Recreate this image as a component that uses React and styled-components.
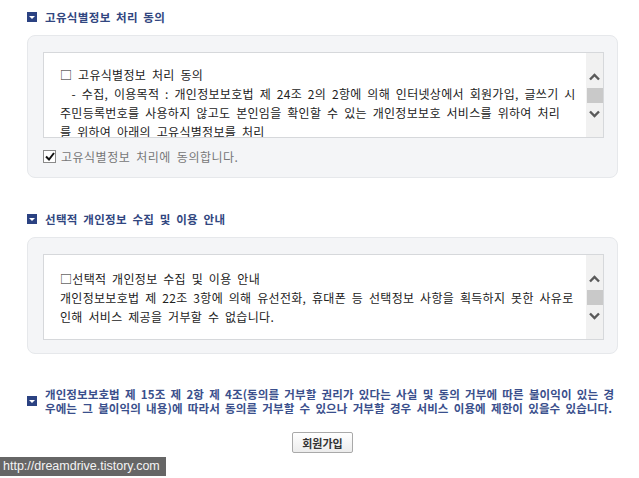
import React from 'react'
import styled, { createGlobalStyle } from 'styled-components'

const GlobalStyle = createGlobalStyle`
    body {
        margin: 0;
        background: #fff;
    }
`
const Page = styled.div`
    width: 639px;
    box-sizing: border-box;
    padding: 9px 21px 0 27px;
    font-family: "Noto Sans CJK KR", sans-serif;
`
const Heading = styled.h3`
    display: flex;
    align-items: center;
    gap: 8px;
    height: 16px;
    margin: ${p => p.$top}px 0 10px 0;
    color: #314680;
    font-size: 11.5px;
    font-weight: 700;
    letter-spacing: 0.35px;
    word-spacing: 2.5px;
`
const Marker = styled.span`
    flex: none;
    width: 10px;
    height: 10px;
    background: #2b4282;
    display: flex;
    justify-content: center;
    align-items: center;
    &::after {
        content: '';
        border-left: 3px solid transparent;
        border-right: 3px solid transparent;
        border-top: 3px solid #fff;
    }
`
const Panel = styled.div`
    background: #f4f5f7;
    border: 1px solid #e6e8eb;
    border-radius: 8px;
    padding: 16px 13px 13px 15px;
`
const Scroller = styled.div`
    display: flex;
    height: 86px;
    box-sizing: border-box;
    background: #fff;
    border: 1px solid #d6d8db;
`
const ScrollText = styled.div`
    flex: 1;
    overflow: hidden;
    padding: ${p => p.$top}px 14px 0 16px;
    color: #222;
    font-size: 12px;
    line-height: 19px;
    letter-spacing: 0.3px;
    word-spacing: 2.8px;
`
const Line = styled.div`
    white-space: pre;
`
const Track = styled.div`
    flex: none;
    width: 17px;
    background: #f1f1f1;
    display: flex;
    flex-direction: column;
    align-items: center;
    justify-content: center;
    gap: 7px;
`
const Thumb = styled.div`
    width: 16px;
    height: 15px;
    background: #c9c9c9;
`
const CheckRow = styled.label`
    display: flex;
    align-items: center;
    gap: 5px;
    height: 16px;
    margin-top: 10px;
    color: #777;
    font-size: 12px;
    letter-spacing: 0.5px;
    word-spacing: 2.8px;
`
const Box = styled.span`
    flex: none;
    width: 11px;
    height: 11px;
    border: 1px solid #8a8a8a;
    background: #fff;
    display: flex;
    align-items: center;
    justify-content: center;
`
const Notice = styled.div`
    display: flex;
    align-items: center;
    gap: 8px;
    margin-top: 33px;
    color: #3a4f8c;
    font-size: 11.5px;
    font-weight: 700;
    line-height: 14px;
    letter-spacing: 0.1px;
    word-spacing: 2.5px;
`
const ButtonRow = styled.div`
    display: flex;
    justify-content: center;
    margin-top: 17px;
`
const Button = styled.button`
    width: 61px;
    height: 21px;
    padding: 0;
    border: 1px solid #a9a9a9;
    border-radius: 2px;
    background: linear-gradient(#ffffff, #ececec);
    color: #333;
    font-family: "Noto Sans CJK KR", sans-serif;
    font-size: 11px;
    font-weight: 700;
    letter-spacing: 0;
`
const Watermark = styled.div`
    position: fixed;
    left: 0;
    bottom: 2px;
    height: 19px;
    padding: 0 6px 0 3px;
    background: #666;
    color: #f4f4f4;
    font-family: "Liberation Sans", Arial, sans-serif;
    font-size: 12.5px;
    line-height: 19px;
`

function Chevron({ up }) {
    return (
        <svg width="11" height="8" viewBox="0 0 11 8">
            <polyline
                points={up ? '1,6.5 5.5,2 10,6.5' : '1,1.5 5.5,6 10,1.5'}
                fill="none"
                stroke="#5a5a5a"
                strokeWidth="2.4"
            />
        </svg>
    )
}

function ScrollBox({ top, children }) {
    return (
        <Scroller>
            <ScrollText $top={top}>{children}</ScrollText>
            <Track>
                <Chevron up />
                <Thumb />
                <Chevron />
            </Track>
        </Scroller>
    )
}

function App() {
    return (
        <>
            <GlobalStyle />
            <Page>
                <Heading $top={0}><Marker />고유식별정보 처리 동의</Heading>
                <Panel>
                    <ScrollBox top={12}>
                        <Line>□ 고유식별정보 처리 동의</Line>
                        <Line>{'  - 수집, 이용목적 : 개인정보보호법 제 24조 2의 2항에 의해 인터넷상에서 회원가입, 글쓰기 시'}</Line>
                        <Line>주민등록번호를 사용하지 않고도 본인임을 확인할 수 있는 개인정보보호 서비스를 위하여 처리</Line>
                        <Line>를 위하여 아래의 고유식별정보를 처리</Line>
                    </ScrollBox>
                    <CheckRow>
                        <Box>
                            <svg width="10" height="9" viewBox="0 0 10 9">
                                <polyline points="1,4.5 4,7.5 9,1" fill="none" stroke="#111" strokeWidth="2" />
                            </svg>
                        </Box>
                        고유식별정보 처리에 동의합니다.
                    </CheckRow>
                </Panel>
                <Heading $top={33}><Marker />선택적 개인정보 수집 및 이용 안내</Heading>
                <Panel>
                    <ScrollBox top={14}>
                        <Line>□선택적 개인정보 수집 및 이용 안내</Line>
                        <Line>개인정보보호법 제 22조 3항에 의해 유선전화, 휴대폰 등 선택정보 사항을 획득하지 못한 사유로</Line>
                        <Line>인해 서비스 제공을 거부할 수 없습니다.</Line>
                    </ScrollBox>
                </Panel>
                <Notice>
                    <Marker />
                    <div>
                        <Line>개인정보보호법 제 15조 제 2항 제 4조(동의를 거부할 권리가 있다는 사실 및 동의 거부에 따른 불이익이 있는 경</Line>
                        <Line>우에는 그 불이익의 내용)에 따라서 동의를 거부할 수 있으나 거부할 경우 서비스 이용에 제한이 있을수 있습니다.</Line>
                    </div>
                </Notice>
                <ButtonRow>
                    <Button>회원가입</Button>
                </ButtonRow>
            </Page>
            <Watermark>http://dreamdrive.tistory.com</Watermark>
        </>
    )
}

export default App
